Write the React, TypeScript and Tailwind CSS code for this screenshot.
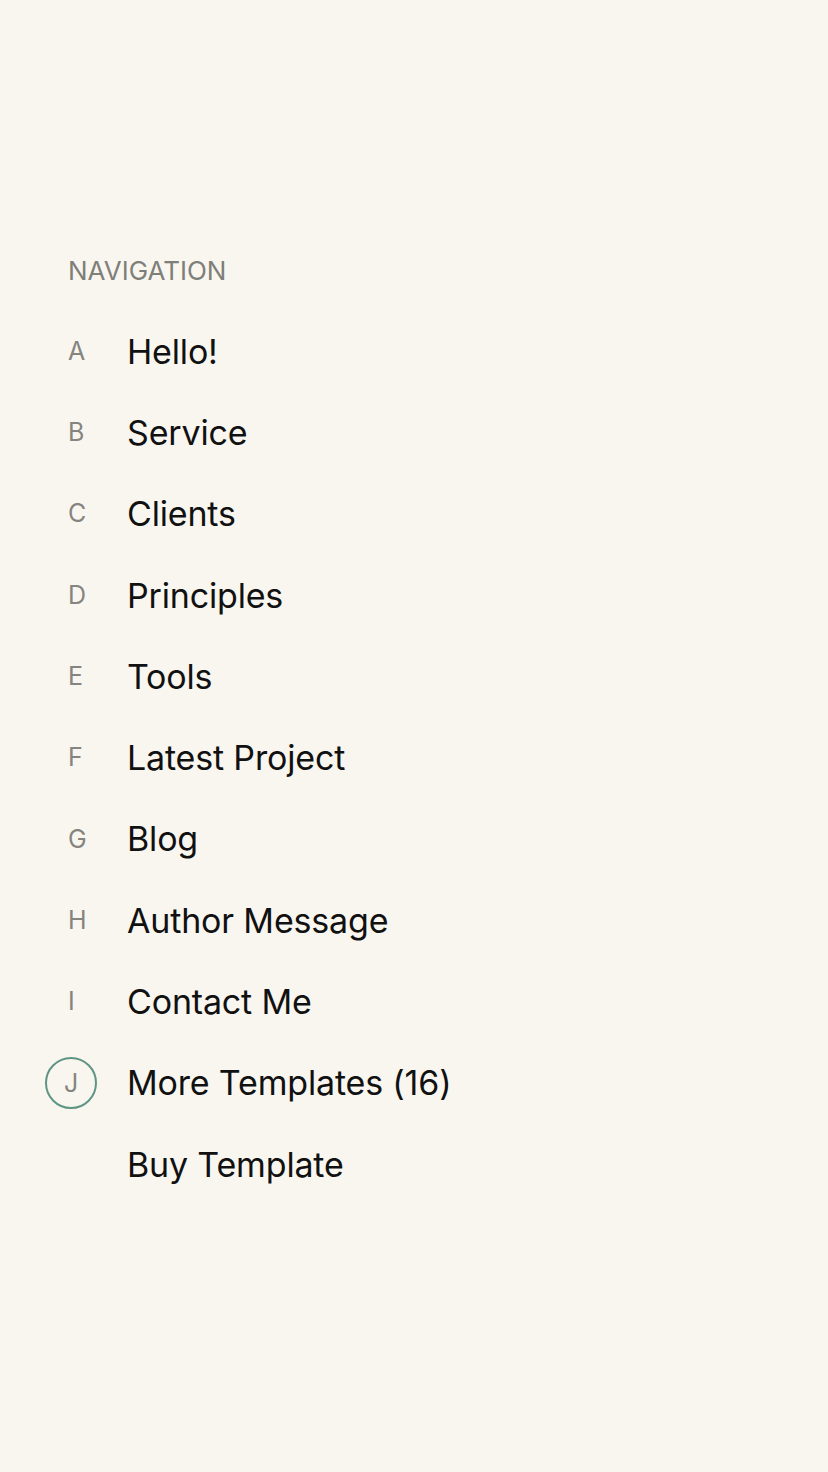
const items = [
  { key: 'A', label: 'Hello!' },
  { key: 'B', label: 'Service' },
  { key: 'C', label: 'Clients' },
  { key: 'D', label: 'Principles' },
  { key: 'E', label: 'Tools' },
  { key: 'F', label: 'Latest Project' },
  { key: 'G', label: 'Blog' },
  { key: 'H', label: 'Author Message' },
  { key: 'I', label: 'Contact Me' },
  { key: 'J', label: 'More Templates (16)', active: true },
  { key: '', label: 'Buy Template' },
];

export default function App() {
  return (
    <div className="min-h-[1472px] w-full bg-[#f9f6f0] font-['Inter','Liberation_Sans',sans-serif] antialiased">
      <nav className="pt-[256px] pl-[68px]">
        <h2 className="text-[26px] leading-[30px] uppercase text-[#7f7f7a]">
          Navigation
        </h2>
        <ul className="mt-[25px] flex flex-col">
          {items.map((item) => (
            <li key={item.label} className="flex h-[81.3px] items-center">
              <span className="relative flex w-[59px] items-center text-[25px] text-[#85847f]">
                {item.active && (
                  <span className="absolute left-[-23px] top-1/2 size-[52px] -translate-y-1/2 rounded-full border-2 border-[#5f9584]" />
                )}
                <span className={item.active ? 'ml-[-4px]' : ''}>{item.key}</span>
              </span>
              <a className="text-[34px] leading-none tracking-[-0.005em] text-[#111111]">{item.label}</a>
            </li>
          ))}
        </ul>
      </nav>
    </div>
  );
}
